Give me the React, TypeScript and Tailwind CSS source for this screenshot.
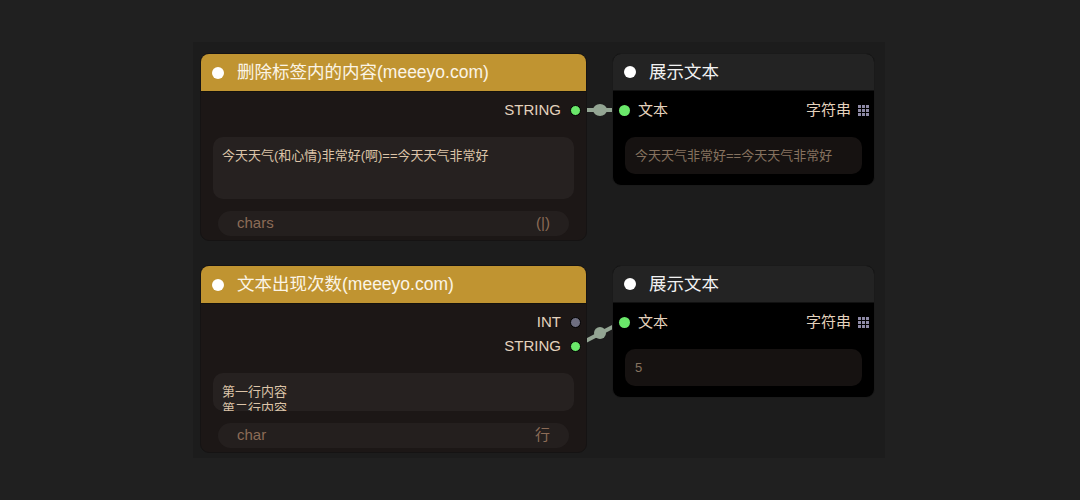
import React from "react";

const font = { fontFamily: '"Liberation Sans", "Noto Sans CJK SC", sans-serif' };

const GridIcon = () => (
  <svg width="11" height="11" viewBox="0 0 11 11" className="ml-[7px]">
    {[0, 4, 8].map((y) =>
      [0, 4, 8].map((x) => (
        <rect key={`${x}-${y}`} x={x} y={y} width="3" height="3" fill="#8e8aa6" />
      ))
    )}
  </svg>
);

type OutputRowProps = { label: string; dot: string };

const OutputRow = ({ label, dot }: OutputRowProps) => (
  <div className="flex h-[24px] items-center justify-end pr-[5px]">
    <span className="text-[15px] text-[#e4d2bd]">{label}</span>
    <span
      className="ml-[9px] h-[11px] w-[11px] rounded-full border border-black"
      style={{ backgroundColor: dot }}
    />
  </div>
);

type SourceNodeProps = {
  title: string;
  outputs: OutputRowProps[];
  text: string[];
  boxHeight: string;
  comboLabel: string;
  comboValue: string;
};

const SourceNode = ({ title, outputs, text, boxHeight, comboLabel, comboValue }: SourceNodeProps) => (
  <div className="flex h-[188px] w-[387px] flex-col overflow-hidden rounded-[9px] border border-[#151313] bg-[#1c1716]">
    <div className="flex h-[38px] shrink-0 items-center gap-[13px] border-b border-[#15120c] bg-[#c09431] pl-[11px]">
      <span className="h-[12px] w-[12px] rounded-full bg-white" />
      <span className="text-[17.5px] text-[#fbf4e6]">{title}</span>
    </div>
    <div className="flex flex-1 flex-col pt-[6px]">
      {outputs.map((o) => (
        <OutputRow key={o.label} {...o} />
      ))}
      <div
        className={`mx-[12px] mt-[15px] overflow-hidden rounded-[10px] bg-[#262120] px-[9px] pt-[10px] text-[13px] leading-[17px] text-[#dcc4a8] ${boxHeight}`}
      >
        {text.map((t) => (
          <div key={t}>{t}</div>
        ))}
      </div>
      <div className="mx-[17px] mt-[12px] flex h-[25px] items-center justify-between rounded-full bg-[#241f1e] px-[19px] text-[15px] text-[#8c6c57]">
        <span>{comboLabel}</span>
        <span>{comboValue}</span>
      </div>
    </div>
  </div>
);

const DisplayNode = ({ value }: { value: string }) => (
  <div className="flex h-[133px] w-[263px] flex-col overflow-hidden rounded-[9px] border border-[#1a1a1a] bg-black">
    <div className="flex h-[37px] shrink-0 items-center gap-[13px] border-b border-[#111] bg-[#232323] pl-[11px]">
      <span className="h-[12px] w-[12px] rounded-full bg-white" />
      <span className="text-[17.5px] text-[#f2f2f2]">展示文本</span>
    </div>
    <div className="flex h-[36px] items-center pl-[6px] pr-[5px] pt-[2px]">
      <span className="h-[11px] w-[11px] rounded-full bg-[#6ae86a]" />
      <span className="ml-[8px] text-[15px] text-[#e4d2bd]">文本</span>
      <span className="ml-auto text-[15px] text-[#e4d2bd]">字符串</span>
      <GridIcon />
    </div>
    <div className="mx-[12px] mt-[10px] flex h-[37px] items-center rounded-[10px] bg-[#161211] px-[10px] text-[13px] text-[#86725f]">
      {value}
    </div>
  </div>
);

export default function App() {
  return (
    <div className="h-[500px] w-[1080px] bg-[#202020] pl-[193px] pt-[42px]" style={font}>
      <div className="relative h-[416px] w-[692px] bg-[#1c1c1c] pl-[7px] pt-[11px]">
        <svg className="absolute inset-0" width="692" height="416">
          <line x1="383" y1="68" x2="431" y2="68" stroke="#93a593" strokeWidth="4" />
          <ellipse cx="407" cy="68" rx="7" ry="6" fill="#93a593" />
          <line x1="383" y1="304" x2="431" y2="279" stroke="#93a593" strokeWidth="4" />
          <circle cx="407" cy="291" r="6" fill="#93a593" />
        </svg>
        <div className="relative grid grid-cols-[387px_263px] grid-rows-[188px_188px] items-start gap-x-[25px] gap-y-[24px]">
          <SourceNode
            title="删除标签内的内容(meeeyo.com)"
            outputs={[{ label: "STRING", dot: "#6ae86a" }]}
            text={["今天天气(和心情)非常好(啊)==今天天气非常好"]}
            boxHeight="h-[62px]"
            comboLabel="chars"
            comboValue="(|)"
          />
          <DisplayNode value="今天天气非常好==今天天气非常好" />
          <SourceNode
            title="文本出现次数(meeeyo.com)"
            outputs={[
              { label: "INT", dot: "#6e6e80" },
              { label: "STRING", dot: "#6ae86a" },
            ]}
            text={["第一行内容", "第二行内容"]}
            boxHeight="h-[38px]"
            comboLabel="char"
            comboValue="行"
          />
          <DisplayNode value="5" />
        </div>
      </div>
    </div>
  );
}
